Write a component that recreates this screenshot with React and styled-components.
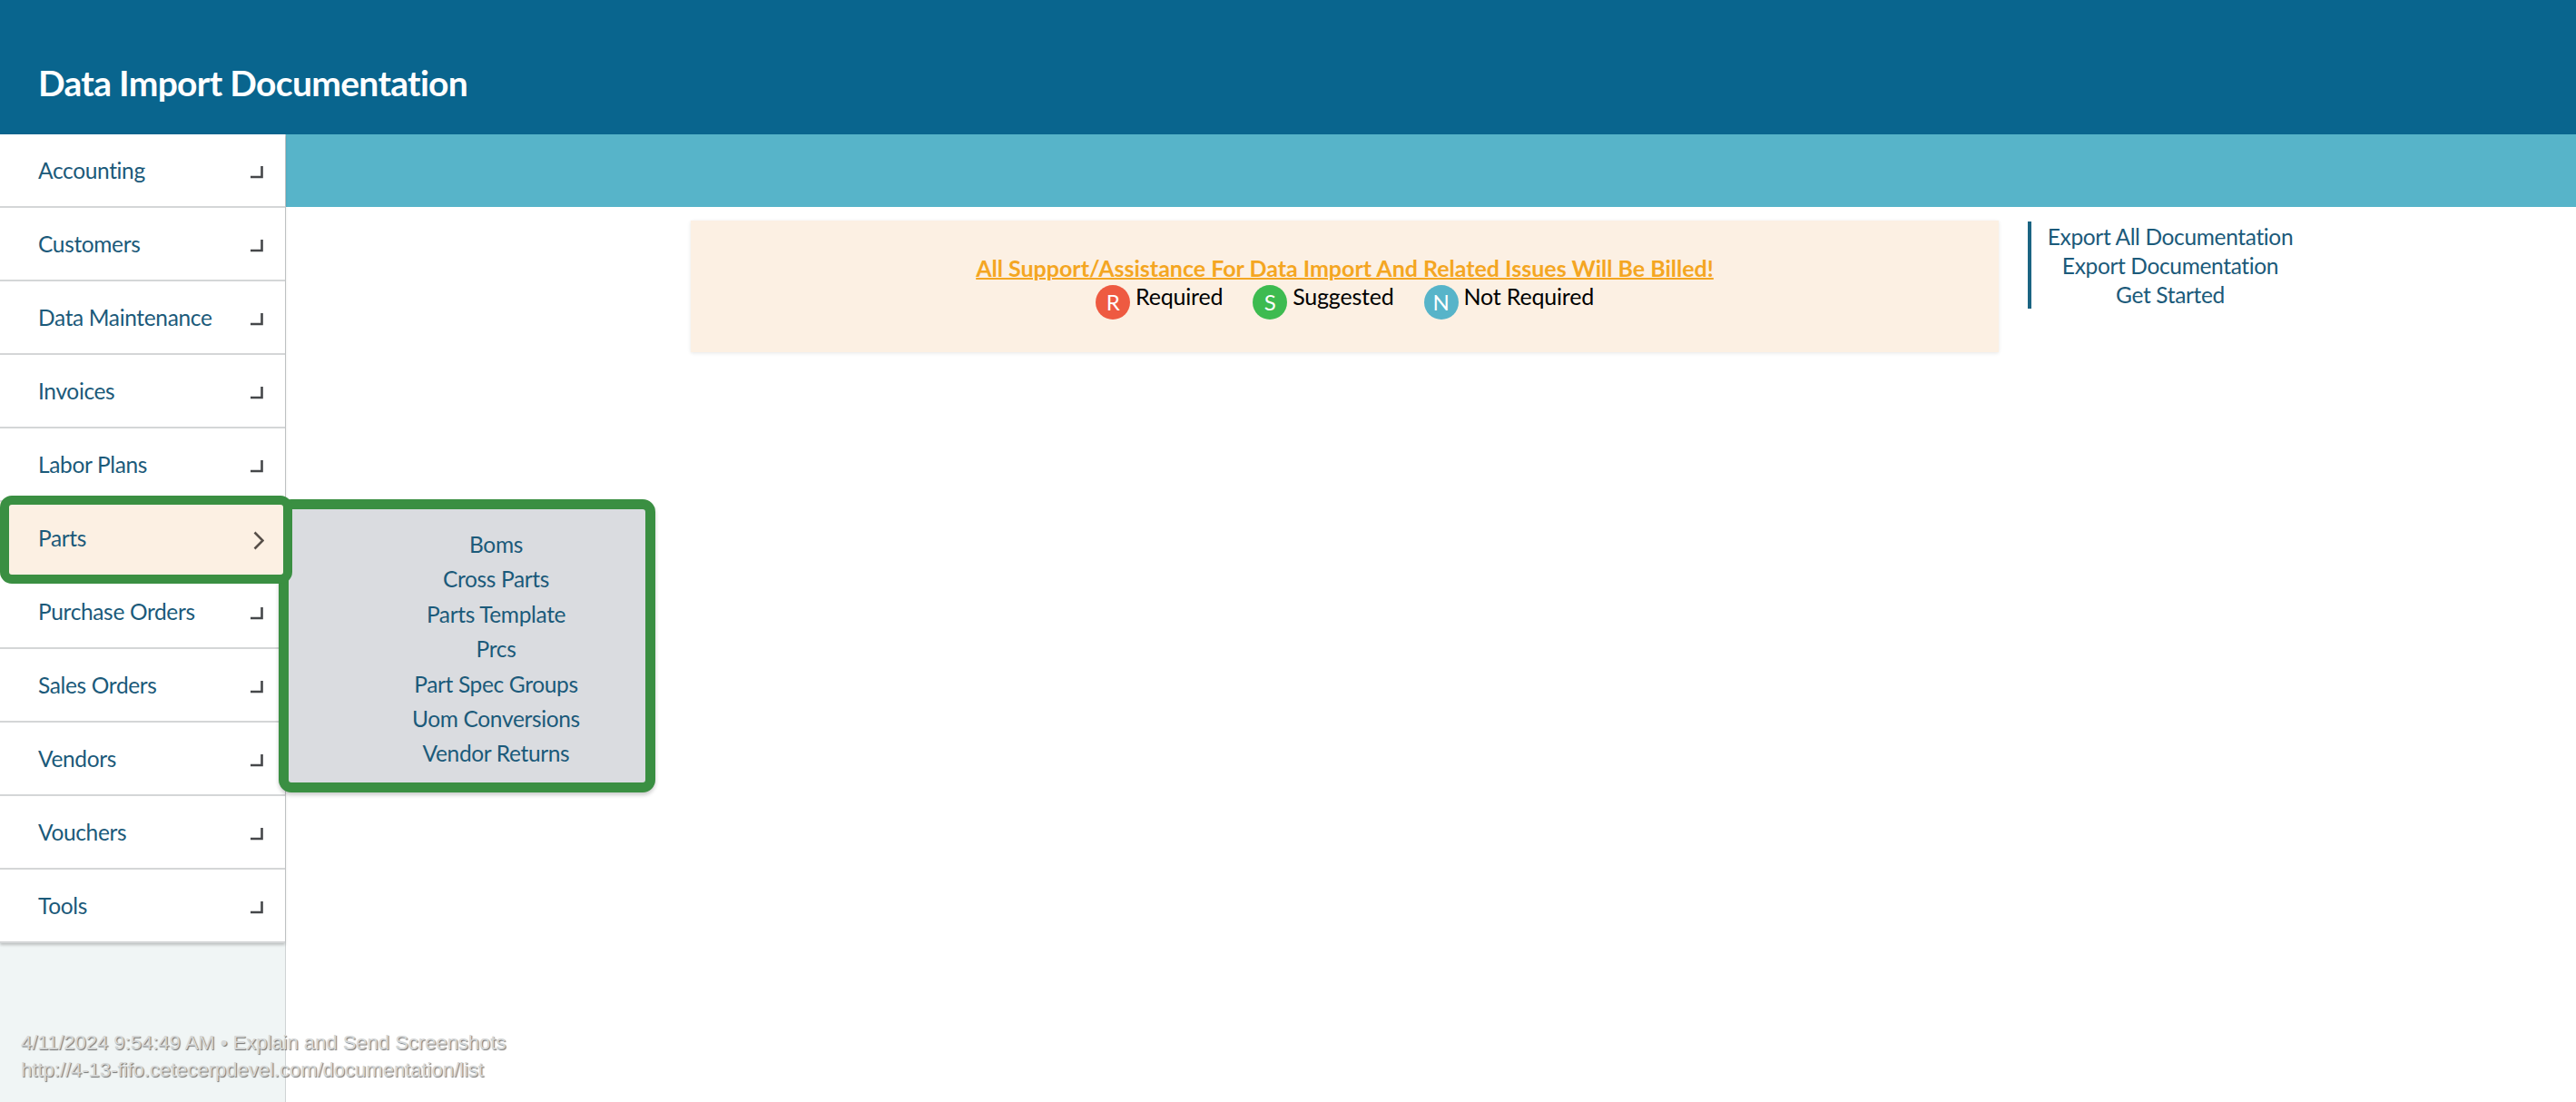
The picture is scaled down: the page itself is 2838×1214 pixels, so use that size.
import React from 'react';
import styled, { createGlobalStyle } from 'styled-components';

const GlobalStyle = createGlobalStyle`
  html, body {
    margin: 0;
    padding: 0;
    background: #fff;
    font-family: "Lato", "Noto Sans", sans-serif;
  }
  *, *::before, *::after {
    box-sizing: border-box;
  }
`;

const Page = styled.div`
  position: relative;
  width: 2838px;
  height: 1214px;
  display: flex;
  flex-direction: column;
  overflow: hidden;
`;

const Header = styled.header`
  height: 148px;
  flex: none;
  display: flex;
  align-items: flex-end;
  padding: 0 0 34px 42px;
  background: #09658e;

  > h1 {
    margin: 0;
    font-size: 39px;
    line-height: 46px;
    font-weight: 700;
    letter-spacing: -0.68px;
    color: #fff;
  }
`;

const Body = styled.div`
  flex: 1;
  display: flex;
  min-height: 0;
`;

const Sidebar = styled.nav`
  position: relative;
  width: 315px;
  flex: none;
  background: #f0f5f5;
  border-right: 1px solid #cfd3d4;
`;

const Menu = styled.ul`
  list-style-type: none;
  margin: 0;
  padding: 0;
  box-shadow: 0 2px 3px rgba(0, 0, 0, 0.22);
`;

const Row = styled.li`
  position: relative;
  height: 81px;
  display: flex;
  align-items: center;
  justify-content: space-between;
  padding: 0 24px 0 42px;
  background: ${(p) => (p.$active ? '#fcf0e3' : '#fff')};
  border-bottom: 2px solid #d4d6d7;
  color: #1b5a7a;
  font-size: 24.5px;
  letter-spacing: -0.35px;
  line-height: 34px;

  ${(p) => p.$active && `
    border-bottom-color: transparent;
    z-index: 3;
    &::after {
      content: '';
      position: absolute;
      left: 0;
      top: -7px;
      width: 322px;
      height: 97px;
      border: 10.5px solid #3a8f42;
      border-radius: 13px;
    }
  `}
`;

const CornerIcon = () => (
  <svg width="15" height="15" viewBox="0 0 15 15" fill="none" style={{ marginTop: 3 }}>
    <path d="M13.5 1v12H1" stroke="#45474a" strokeWidth="2.6" />
  </svg>
);

const ArrowIcon = () => (
  <svg width="12" height="21" viewBox="0 0 12 21" fill="none" style={{ marginTop: 5, marginRight: -1 }}>
    <path d="M1.5 1.5l9 9-9 9" stroke="#574f49" strokeWidth="2.6" />
  </svg>
);

const Flyout = styled.ul`
  position: absolute;
  left: 307px;
  top: 402px;
  width: 415px;
  height: 323px;
  margin: 0;
  padding: 20px 0 0 64px;
  list-style-type: none;
  z-index: 2;
  background: #dadce0;
  border: 11px solid #3a8f42;
  border-radius: 14px;
  box-shadow: 0 3px 4px rgba(0, 0, 0, 0.2);

  > li {
    height: 38.4px;
    line-height: 38px;
    font-size: 24.5px;
    letter-spacing: -0.35px;
    text-align: center;
    color: #1b5a7a;
  }
`;

const Main = styled.main`
  flex: 1;
  min-width: 0;
`;

const Band = styled.div`
  height: 80px;
  background: #57b4c9;
`;

const Content = styled.div`
  display: flex;
  align-items: flex-start;
  padding: 15px 0 0 446px;
`;

const Banner = styled.section`
  width: 1441px;
  height: 145px;
  padding: 35px 0 0;
  background: #fcf0e3;
  box-shadow: 0 1px 4px rgba(0, 0, 0, 0.1);
  text-align: center;

  > a {
    display: block;
    font-size: 25px;
    line-height: 34px;
    font-weight: 700;
    color: #f4a622;
    text-decoration: underline;
    text-decoration-thickness: 2px;
  }
`;

const Legend = styled.div`
  display: flex;
  justify-content: center;
  gap: 33px;
  margin-top: -2px;
`;

const LegendItem = styled.div`
  display: flex;
  align-items: flex-start;
  gap: 6px;
  font-size: 25px;
  letter-spacing: -0.2px;
  line-height: 32px;
  color: #000;
`;

const Badge = styled.span`
  width: 38px;
  height: 38px;
  margin-top: 4px;
  border-radius: 50%;
  display: flex;
  align-items: center;
  justify-content: center;
  background: ${(p) => p.$color};
  color: #fff;
  font-size: 24px;
  line-height: 1;
`;

const SideLinks = styled.ul`
  width: 310px;
  margin: 1px 0 0 32px;
  padding: 0;
  list-style-type: none;
  border-left: 4px solid #1b6482;
  text-align: center;

  > li {
    height: 32px;
    line-height: 33px;
    font-size: 24.5px;
    letter-spacing: -0.35px;
    color: #1b5a7a;
  }
`;

const Stamp = styled.div`
  position: absolute;
  left: 23px;
  bottom: 20px;
  z-index: 5;
  font-family: "Liberation Sans", Arial, sans-serif;
  font-size: 22px;
  line-height: 30px;
  color: #d6d8d8;
  text-shadow: 1px 1px 1px rgba(70, 70, 70, 0.75);
`;

const menu = ['Accounting', 'Customers', 'Data Maintenance', 'Invoices', 'Labor Plans', 'Parts', 'Purchase Orders', 'Sales Orders', 'Vendors', 'Vouchers', 'Tools'];
const partsMenu = ['Boms', 'Cross Parts', 'Parts Template', 'Prcs', 'Part Spec Groups', 'Uom Conversions', 'Vendor Returns'];
const legend = [
  { letter: 'R', label: 'Required', color: '#ee5a41' },
  { letter: 'S', label: 'Suggested', color: '#3dbb50' },
  { letter: 'N', label: 'Not Required', color: '#57b4c9' },
];
const links = ['Export All Documentation', 'Export Documentation', 'Get Started'];

const App = () => {
  return (
    <Page>
      <GlobalStyle />
      <Header>
        <h1>Data Import Documentation</h1>
      </Header>
      <Body>
        <Sidebar>
          <Menu>
            {menu.map((name) => (
              <Row key={name} $active={name === 'Parts'}>
                {name}
                {name === 'Parts' ? <ArrowIcon /> : <CornerIcon />}
              </Row>
            ))}
          </Menu>
          <Flyout>
            {partsMenu.map((name) => <li key={name}>{name}</li>)}
          </Flyout>
        </Sidebar>
        <Main>
          <Band />
          <Content>
            <Banner>
              <a>All Support/Assistance For Data Import And Related Issues Will Be Billed!</a>
              <Legend>
                {legend.map((item) => (
                  <LegendItem key={item.letter}>
                    <Badge $color={item.color}>{item.letter}</Badge>
                    {item.label}
                  </LegendItem>
                ))}
              </Legend>
            </Banner>
            <SideLinks>
              {links.map((name) => <li key={name}>{name}</li>)}
            </SideLinks>
          </Content>
        </Main>
      </Body>
      <Stamp>
        <div>4/11/2024 9:54:49 AM • Explain and Send Screenshots</div>
        <div>http://4-13-fifo.cetecerpdevel.com/documentation/list</div>
      </Stamp>
    </Page>
  );
};

export default App;
